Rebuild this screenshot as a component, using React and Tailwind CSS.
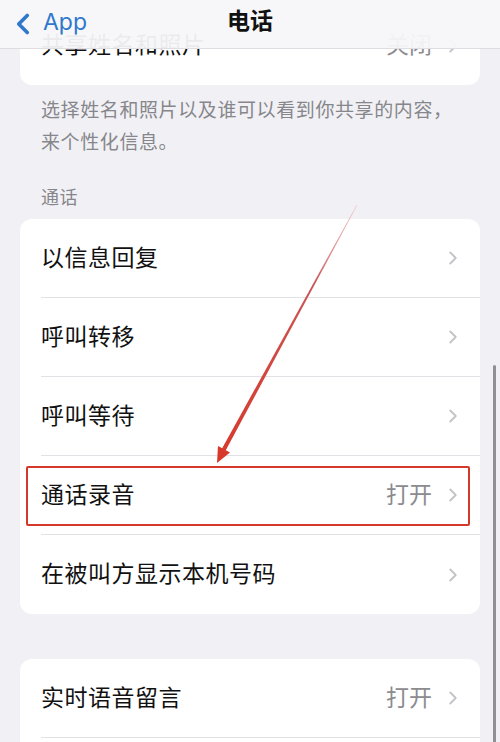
import { ChevronRight, ChevronLeft } from 'lucide-react';

const font = { fontFamily: '"Inter", "Noto Sans CJK SC", "Noto Sans", sans-serif' };

const Row = ({ label, value, last }) => (
    <div className="h-[79px] pl-[21px] flex">
        <div className={`flex-1 flex items-center pr-[20px] ${last ? '' : 'border-b border-[#e2e2e6]'}`}>
            <span className="flex-1 text-[23px] text-[#111111] tracking-[0.5px]">{label}</span>
            {value && <span className="text-[23px] text-[#8b8b90] mr-[10px]">{value}</span>}
            {label && <ChevronRight size={22} strokeWidth={2} className="text-[#c3c3c8] -mr-[4px]" />}
        </div>
    </div>
);

export default function App() {
    return (
        <div className="relative w-[500px] h-[742px] overflow-hidden bg-[#f1f1f5]" style={font}>
            {/* content */}
            <div className="flex flex-col">
                <div className="mt-[6px] mx-[20px] bg-white rounded-[12px] overflow-hidden">
                    <Row label="共享姓名和照片" value="关闭" last />
                </div>

                <p className="mt-[10px] px-[41px] text-[19px] leading-[32px] tracking-[0.6px] text-[#86868b]">
                    选择姓名和照片以及谁可以看到你共享的内容，来个性化信息。
                </p>

                <div className="mt-[27px] mb-[9px] px-[41px] text-[18px] leading-[24px] tracking-[0.5px] text-[#86868b]">通话</div>

                <div className="mx-[20px] bg-white rounded-[12px]">
                    <Row label="以信息回复" />
                    <Row label="呼叫转移" />
                    <Row label="呼叫等待" />
                    <div className="relative">
                        <Row label="通话录音" value="打开" />
                        {/* highlight box */}
                        <div className="absolute left-[6px] right-[10px] top-[10px] h-[60px] border-2 border-[#d4392c] rounded-[2px]" />
                    </div>
                    <Row label="在被叫方显示本机号码" last />
                </div>

                <div className="mt-[45px] mx-[20px] bg-white rounded-[12px]">
                    <Row label="实时语音留言" value="打开" />
                    <Row />
                </div>
            </div>

            {/* nav bar */}
            <div className="absolute top-0 left-0 right-0 h-[49px] bg-[#f7f7f9]/95 border-b border-[#dedee2] flex items-center">
                <div className="flex items-center pl-[6px] text-[#2f78cc]">
                    <ChevronLeft size={34} strokeWidth={2.6} />
                    <span className="text-[23px] ml-[3px] -mt-[4px]">App</span>
                </div>
                <div className="absolute left-0 right-0 top-0 h-[42px] flex items-center justify-center text-[23px] font-semibold text-[#111111] pointer-events-none">
                    电话
                </div>
            </div>

            {/* scrollbar */}
            <div className="absolute right-[4px] top-[365px] w-[3px] h-[390px] rounded-full bg-[#8f8f94]" />

            {/* annotation arrow */}
            <svg className="absolute inset-0 pointer-events-none" width="500" height="742" viewBox="0 0 500 742">
                <defs>
                    <linearGradient id="shaft" x1="357" y1="205" x2="218" y2="462" gradientUnits="userSpaceOnUse">
                        <stop offset="0" stopColor="#e9b3b3" stopOpacity="0.6" />
                        <stop offset="0.3" stopColor="#c95656" />
                        <stop offset="1" stopColor="#d8382a" />
                    </linearGradient>
                </defs>
                <polygon points="356.7,204.8 357.3,205.2 225.5,450.8 221.9,448.8" fill="url(#shaft)" />
                <polygon points="217,463 218,446 230,452.5" fill="#d8382a" />
            </svg>
        </div>
    );
}
